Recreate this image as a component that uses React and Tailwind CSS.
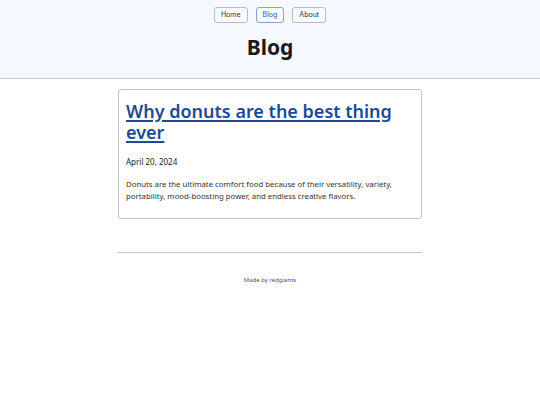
export default function App() {
  const links = [
    { label: "Home", active: false },
    { label: "Blog", active: true },
    { label: "About", active: false },
  ];

  return (
    <div className="min-h-screen bg-white text-[#222]" style={{ fontFamily: '"Noto Sans", sans-serif' }}>
      <header className="h-[79px] bg-[#f5f8ff] border-b border-[#c8c8cc] flex flex-col items-center pt-[7px]">
        <nav className="flex gap-[8px]">
          {links.map((l) => (
            <a
              key={l.label}
              href="#"
              className={
                "h-[16px] px-[6px] flex items-center rounded-[3px] border text-[7px] bg-white/40 " +
                (l.active ? "border-[#8aa0c8] text-[#3a5a8e]" : "border-[#b8bcc6] text-[#333]")
              }
              style={{ fontFamily: "Inter, sans-serif" }}
            >
              {l.label}
            </a>
          ))}
        </nav>
        <h1 className="mt-[11px] text-[21px] leading-[26px] font-bold text-[#1a1a1a]">Blog</h1>
      </header>

      <main className="w-[304px] mx-auto pt-[10px]">
        <article className="border border-[#c4c4c8] rounded-[3px] px-[7px] pt-[11px] pb-[16px]">
          <a href="#" className="block text-[18px] leading-[21px] font-semibold text-[#1a4b96] underline decoration-[1.5px] underline-offset-[2px]">
            Why donuts are the best thing ever
          </a>
          <p className="mt-[13px] text-[8px] leading-[12px]">April 20, 2024</p>
          <p className="mt-[11px] text-[7.8px] leading-[11.5px] text-[#333]">
            Donuts are the ultimate comfort food because of their versatility, variety, portability, mood-boosting power, and endless creative flavors.
          </p>
        </article>

        <hr className="mt-[33px] border-t border-[#c8c8c8]" />
        <footer className="mt-[23px] text-center text-[6px] text-[#555]">Made by redgiants</footer>
      </main>
    </div>
  );
}
